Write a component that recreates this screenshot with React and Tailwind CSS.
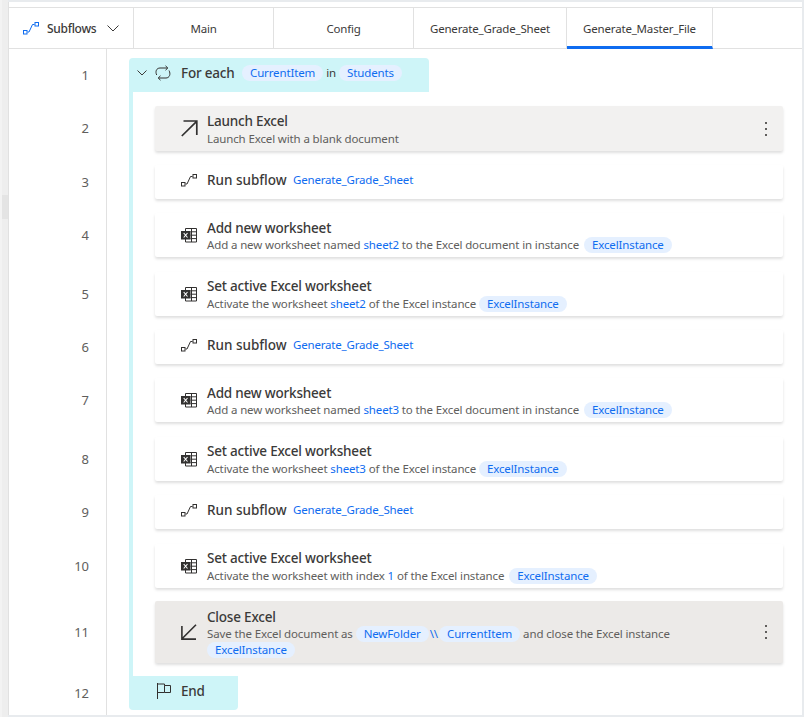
import React from 'react';

const SubflowIcon = ({ className }) => (
  <svg className={className} width="16" height="13" viewBox="0 0 16 13" fill="none" stroke="currentColor" strokeWidth="1">
    <rect x="0.5" y="8.5" width="3.5" height="3.5" />
    <rect x="12" y="0.5" width="3.5" height="3.5" />
    <path d="M4.5 10 L6 10 L9.5 2.5 L11.5 2.5" />
  </svg>
);

const ExcelIcon = () => (
  <svg width="16" height="15" viewBox="0 0 16 15" fill="none" stroke="#323130" strokeWidth="1">
    <path d="M4.5 3 V0.5 H15.5 V14 H4.5 V11" />
    <path d="M9.5 3.8 H15.5 M9.5 7.2 H15.5 M9.5 10.6 H15.5 M10.5 0.5 V14" />
    <rect x="0" y="3" width="9.5" height="8.5" fill="#323130" stroke="none" />
    <path d="M2.7 5 L6.5 9.5 M6.5 5 L2.7 9.5" stroke="#fff" strokeWidth="1.1" />
  </svg>
);

const ArrowUpRight = () => (
  <svg width="17" height="17" viewBox="0 0 17 17" fill="none" stroke="#323130" strokeWidth="1.7">
    <path d="M0.8 16 L15.4 1.6 M2.5 1 H15.8 V15" />
  </svg>
);

const ArrowDownLeft = () => (
  <svg width="16" height="16" viewBox="0 0 16 16" fill="none" stroke="#323130" strokeWidth="1.6">
    <path d="M15 0.8 L1.5 14.3 M0.9 2 V15.1 H15" />
  </svg>
);

const LoopIcon = () => (
  <svg width="16" height="16" viewBox="0 0 16 16" fill="none" stroke="#323130" strokeWidth="1">
    <path d="M1.7 10 C0 6.5 1.5 3 5 3 H12.5" />
    <path d="M10.5 0.8 L12.8 3 L10.5 5.2" />
    <path d="M14 5.5 C16 9 14.5 13 11 13 H3.5" />
    <path d="M5.5 10.8 L3.2 13 L5.5 15.2" />
  </svg>
);

const FlagIcon = () => (
  <svg width="14" height="16" viewBox="0 0 14 16" fill="none" stroke="#323130" strokeWidth="1">
    <path d="M0.5 0 V16" />
    <path d="M0.5 1 H7.5 V2.5 H13.5 V9.5 H7.5 V2.5 M7.5 9.5 H0.5" />
  </svg>
);

const Kebab = () => (
  <div className="flex flex-col gap-[4px] ml-auto mr-[16px] self-center">
    <span className="w-[2px] h-[2px] bg-[#605e5c]" />
    <span className="w-[2px] h-[2px] bg-[#605e5c]" />
    <span className="w-[2px] h-[2px] bg-[#605e5c]" />
  </div>
);

const Pill = ({ children, className = '' }) => (
  <span className={`inline-block bg-[#e5f0ff] text-[#0f6cf0] rounded-full px-2 leading-[16px] ${className}`}>{children}</span>
);

const Link = ({ children }) => <span className="text-[#0f6cf0]">{children}</span>;

const RunSubflow = () => (
  <div className="bg-white h-[34px] rounded-[2px] shadow-[0_2px_3px_rgba(0,0,0,0.13)] flex items-center pb-[4px]">
    <div className="w-[52px] pl-[26px] flex shrink-0 text-[#323130]"><SubflowIcon /></div>
    <span className="w-[80px] shrink-0 text-[13.5px] font-medium text-[#3b3a39]">Run subflow</span>
    <span className="ml-[6px] text-[11.5px] tracking-[-0.18px] text-[#0f6cf0]">Generate_Grade_Sheet</span>
  </div>
);

const Card = ({ icon, title, bg = 'bg-white', menu, children, height = 'h-[44px]', pt = 'pt-[6px]', gap = '' }) => (
  <div className={`${bg} ${height} rounded-[2px] flex shadow-[0_2px_3px_rgba(0,0,0,0.13)]`}>
    <div className="w-[52px] pl-[26px] flex items-center shrink-0">{icon}</div>
    <div className={`${pt} min-w-0`}>
      <div className="text-[13.5px] tracking-[-0.2px] leading-[18px] font-medium text-[#3b3a39]">{title}</div>
      <div className={`${gap} text-[11.5px] tracking-[-0.13px] leading-[16px] text-[#605e5c]`}>{children}</div>
    </div>
    {menu && <Kebab />}
  </div>
);

const Row = ({ num, pb, children, head, tail }) => (
  <div className="flex">
    <div className={`w-[98px] shrink-0 border-r border-[#e1e1e1] flex items-center justify-end pr-[17px] pt-[1px] text-[13px] text-[#605e5c] ${pb}`}>{num}</div>
    <div className="flex-1 min-w-0 pl-[22px]">
      {head || tail ? children : (
        <div className={`border-l-4 border-[#cef5f8] pl-[22px] pr-[19px] ${pb}`}>{children}</div>
      )}
    </div>
  </div>
);

const Tab = ({ label, width, active }) => (
  <div className={`${width} shrink-0 border-r border-[#e1e1e1] flex items-center justify-center text-[11.5px] tracking-[-0.18px] text-[#3b3a39] ${active ? 'border-b-[3px] border-b-[#0f6cf0] pt-[4px] -mb-[1px]' : 'pt-[1px]'}`}>
    {label}
  </div>
);

export default function App() {
  return (
    <div className="w-[804px] h-[717px] bg-[#e8ebee] flex font-['Noto_Sans',sans-serif]">
      {/* Left resize strip */}
      <div className="w-[8px] shrink-0 bg-[#f3f3f3] pl-[2px]">
        <div className="h-full bg-[#eeeeee] pt-[195px]">
          <div className="h-[24px] bg-[#e4e4e4]" />
        </div>
      </div>

      <div className="flex-1 min-w-0 mt-[2px] mb-[2px] mr-[2px] bg-white border-l border-[#e1e1e1] pt-[5px] flex flex-col">
        {/* Tab bar */}
        <div className="h-[42px] shrink-0 border-y border-[#e1e1e1] flex">
          <div className="w-[125px] shrink-0 border-r border-[#e1e1e1] flex items-center pl-[14px] pt-[1px] text-[#3b3a39]">
            <SubflowIcon className="text-[#0f6cf0]" />
            <span className="ml-[8px] w-[60px] text-[12px] tracking-[-0.3px] font-medium">Subflows</span>
            <svg width="12" height="7" viewBox="0 0 12 7" fill="none" stroke="#3b3a39" strokeWidth="1">
              <path d="M0.5 0.5 L6 6 L11.5 0.5" />
            </svg>
          </div>
          <Tab label="Main" width="w-[140px]" />
          <Tab label="Config" width="w-[140px]" />
          <Tab label="Generate_Grade_Sheet" width="w-[153px]" />
          <Tab label="Generate_Master_File" width="w-[146px]" active />
        </div>

        <div className="flex-1 flex flex-col">
          <div className="flex h-[9px] shrink-0"><div className="w-[98px] border-r border-[#e1e1e1]" /></div>

          <Row num="1" pb="pb-[14px]" head>
            <div className="pb-[14px] relative">
              <div className="absolute left-0 bottom-0 h-[14px] w-[4px] bg-[#cef5f8]" />
              <div className="w-[300px] h-[34px] bg-[#cef5f8] rounded-t-[4px] flex items-center pb-[4px] text-[11.5px] tracking-[-0.13px] text-[#3b3a39]">
                <svg className="ml-[8px]" width="10" height="6" viewBox="0 0 10 6" fill="none" stroke="#3b3a39" strokeWidth="1">
                  <path d="M0.5 0.5 L5 5 L9.5 0.5" />
                </svg>
                <span className="ml-[8px] flex"><LoopIcon /></span>
                <span className="ml-[10px] w-[54px] text-[13.5px] tracking-[-0.2px] font-medium">For each</span>
                <Pill className="ml-[7px]">CurrentItem</Pill>
                <span className="mx-[3px]">in</span>
                <Pill>Students</Pill>
              </div>
            </div>
          </Row>

          <Row num="2" pb="pb-[14px]">
            <Card icon={<ArrowUpRight />} title="Launch Excel" bg="bg-[#f2f1f0]" height="h-[45px]" gap="mt-[1px]" menu>
              Launch Excel with a blank document
            </Card>
          </Row>
          <Row num="3" pb="pb-[14px]">
            <RunSubflow />
          </Row>
          <Row num="4" pb="pb-[15px]">
            <Card icon={<ExcelIcon />} title="Add new worksheet">
              Add a new worksheet named <Link>sheet2</Link> to the Excel document in instance <Pill className="ml-[2px]">ExcelInstance</Pill>
            </Card>
          </Row>
          <Row num="5" pb="pb-[14px]">
            <Card icon={<ExcelIcon />} title="Set active Excel worksheet" pt="pt-[5px]" gap="mt-[1px]">
              Activate the worksheet <Link>sheet2</Link> of the Excel instance <Pill>ExcelInstance</Pill>
            </Card>
          </Row>
          <Row num="6" pb="pb-[14px]">
            <RunSubflow />
          </Row>
          <Row num="7" pb="pb-[15px]">
            <Card icon={<ExcelIcon />} title="Add new worksheet">
              Add a new worksheet named <Link>sheet3</Link> to the Excel document in instance <Pill className="ml-[2px]">ExcelInstance</Pill>
            </Card>
          </Row>
          <Row num="8" pb="pb-[14px]">
            <Card icon={<ExcelIcon />} title="Set active Excel worksheet" pt="pt-[5px]" gap="mt-[1px]">
              Activate the worksheet <Link>sheet3</Link> of the Excel instance <Pill>ExcelInstance</Pill>
            </Card>
          </Row>
          <Row num="9" pb="pb-[15px]">
            <RunSubflow />
          </Row>
          <Row num="10" pb="pb-[13px]">
            <Card icon={<ExcelIcon />} title="Set active Excel worksheet" pt="pt-[5px]" gap="mt-[1px]">
              Activate the worksheet with index <Link>1</Link> of the Excel instance <Pill className="ml-[2px]">ExcelInstance</Pill>
            </Card>
          </Row>
          <Row num="11" pb="pb-[13px]">
            <Card icon={<ArrowDownLeft />} title="Close Excel" bg="bg-[#eceae8]" height="h-[62px]" pt="pt-[7px]" menu>
              Save the Excel document as <Pill>NewFolder</Pill><span className="text-[#0f6cf0] mx-[1px]">\\</span><Pill>CurrentItem</Pill> and close the Excel instance<br /><Pill>ExcelInstance</Pill>
            </Card>
          </Row>

          <Row num="12" pb="" tail>
            <div className="w-[109px] h-[34px] bg-[#cef5f8] rounded-b-[4px] flex items-center pl-[28px] pb-[4px]">
              <FlagIcon />
              <span className="ml-[10px] text-[13.5px] tracking-[-0.2px] font-medium text-[#3b3a39]">End</span>
            </div>
          </Row>
          <div className="flex flex-1"><div className="w-[98px] border-r border-[#e1e1e1]" /></div>
        </div>
      </div>
    </div>
  );
}
